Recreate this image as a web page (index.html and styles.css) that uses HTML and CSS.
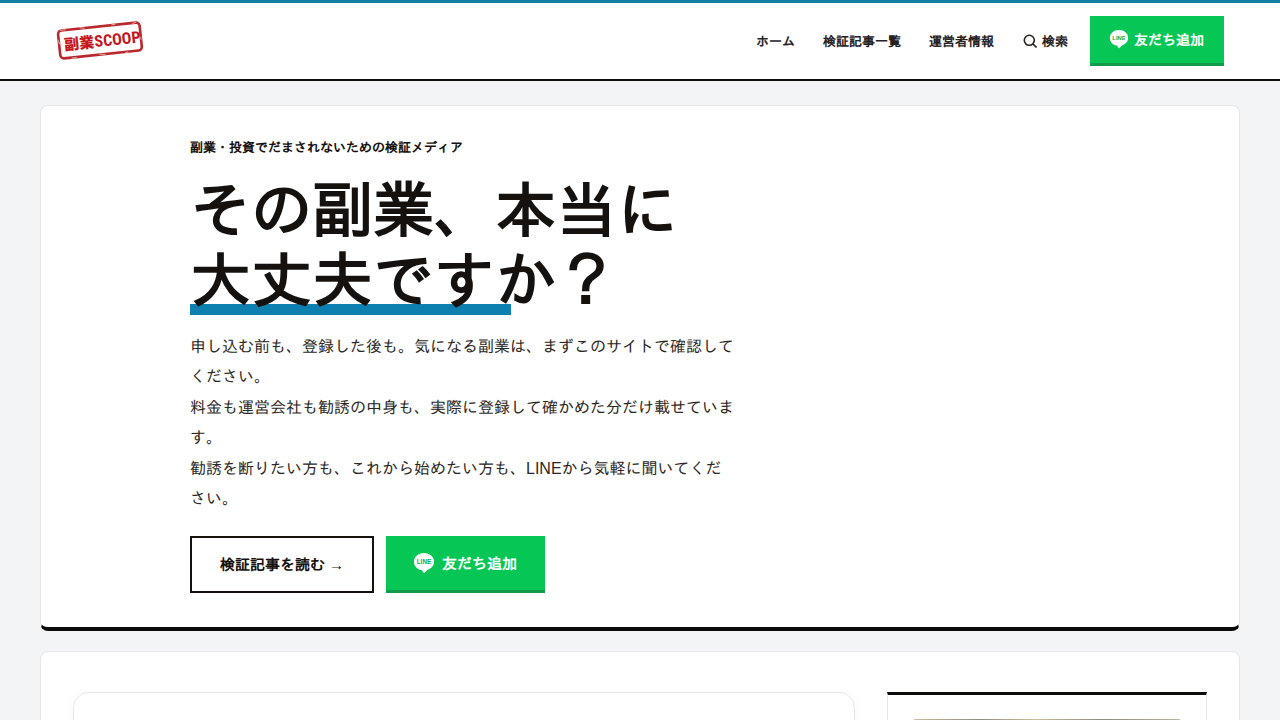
FILE: index.html
```html
<!DOCTYPE html>
<html lang="ja">
<head>
<meta charset="utf-8">
<meta name="viewport" content="width=device-width, initial-scale=1">
<title>副業SCOOP</title>
<link rel="stylesheet" href="styles.css">
</head>
<body>
<header class="site-header">
  <a class="logo" href="#" aria-label="副業SCOOP">
    <svg width="88" height="40" viewBox="0 0 88 40">
      <g transform="rotate(-6 44 20)">
        <rect x="3" y="5.500" width="82" height="28" rx="3.500" fill="none" stroke="#b9282c" stroke-width="2.600"/>
        <text x="8" y="25.500" class="stamp-kanji">副業</text>
        <text x="38.500" y="25.500" class="stamp-latin">SCOOP</text>
        <path d="M5 5.200h6M25 4.600l5 1M57 5h4M78 6l4-1M2.500 15l1 4M85 20v3M14 34h5M42 33l6 1M68 34h3" stroke="#fff" stroke-width="1" opacity=".6"/>
      </g>
    </svg>
  </a>
  <nav class="nav">
    <a href="#">ホーム</a>
    <a href="#">検証記事一覧</a>
    <a href="#">運営者情報</a>
    <button class="search" type="button">
      <svg width="14" height="14" viewBox="0 0 14 14" fill="none" stroke="currentColor" stroke-width="1.600"><circle cx="6.300" cy="6.300" r="5"/><path d="M10 10l3.500 3.500"/></svg>
      検索
    </button>
    <a class="line-btn line-btn-small" href="#">
      <svg width="20" height="20" viewBox="0 0 24 24"><path fill="#fff" d="M12 0C5.900 0 1 4.200 1 9.500c0 4.600 3.500 8.200 8.300 9.200l2.100 2.700c.4.500.8.500 1.300.1l3.100-3.200C20 16.700 23 13.700 23 9.500 23 4.200 18.100 0 12 0z"/><text x="12" y="12" text-anchor="middle" class="line-word">LINE</text></svg>
      友だち追加
    </a>
  </nav>
</header>
<main class="page">
  <section class="panel hero">
    <div class="hero-inner">
      <p class="eyebrow">副業・投資でだまされないための検証メディア</p>
      <h1>その副業、本当に<br><span class="marked">大丈夫です</span>か？</h1>
      <div class="lead">
        <p>申し込む前も、登録した後も。気になる副業は、まずこのサイトで確認してください。</p>
        <p>料金も運営会社も勧誘の中身も、実際に登録して確かめた分だけ載せています。</p>
        <p>勧誘を断りたい方も、これから始めたい方も、LINEから気軽に聞いてください。</p>
      </div>
      <div class="actions">
        <a class="read-btn" href="#">検証記事を読む <span class="arrow">→</span></a>
        <a class="line-btn" href="#">
          <svg width="22" height="22" viewBox="0 0 24 24"><path fill="#fff" d="M12 1C5.900 1 1 5.200 1 10.500c0 4.600 3.500 8.200 8.300 9.200l2.100 2.700c.4.500.8.500 1.300.1l3.100-3.200C20 17.700 23 14.700 23 10.500 23 5.200 18.100 1 12 1z"/><text x="12" y="13" text-anchor="middle" class="line-word">LINE</text></svg>
          友だち追加
        </a>
      </div>
    </div>
  </section>
  <section class="panel content">
    <article class="card"></article>
    <aside class="sidebar"><div class="banner"></div></aside>
  </section>
</main>
</body>
</html>
```
FILE: styles.css
```css
* { box-sizing: border-box; }
body {
  margin: 0;
  background: #f3f4f6;
  color: #15110e;
  font-family: "Liberation Sans", "IPAGothic", "Noto Sans CJK JP", sans-serif;
  font-size: 16px;
}
h1, p { margin: 0; }
a { color: inherit; text-decoration: none; }
.line-word { font: 700 7px "Liberation Sans", sans-serif; fill: #06b04d; }

.site-header {
  display: flex;
  align-items: center;
  justify-content: space-between;
  padding: 13px 56px;
  background: #fff;
  border-top: 3px solid #147da3;
  border-bottom: 2px solid #0e0c0b;
}
.logo svg { display: block; overflow: visible; }
.stamp-kanji { font: 900 15px "Noto Sans CJK JP", sans-serif; fill: #c4161c; }
.stamp-latin { font: 700 16px "Roboto Condensed", "Liberation Sans Narrow", Roboto, sans-serif; fill: #c4161c; }
.nav {
  display: flex;
  align-items: center;
  gap: 28px;
  color: #26221f;
  font-size: 13px;
  font-weight: 700;
}
.search {
  display: flex;
  align-items: center;
  gap: 5px;
  padding: 0 0 0 1px;
  border: 0;
  background: none;
  color: inherit;
  font: inherit;
}
.nav .line-btn { margin-left: -6px; }

.line-btn {
  display: inline-flex;
  align-items: center;
  gap: 7px;
  padding: 0 28px 0 27px;
  background: #06c755;
  border-bottom: 3px solid #139b4b;
  color: #fff;
  font-size: 15px;
  font-weight: 700;
}
.line-btn-small {
  gap: 5px;
  height: 50px;
  padding: 0 20px 0 19px;
  font-size: 14px;
}

.page {
  display: grid;
  gap: 20px;
  max-width: 1200px;
  margin: 24px auto;
}
.panel {
  background: #fff;
  border: 1px solid #e5e7eb;
  border-radius: 8px;
}
.hero {
  padding: 32px 24px 34px;
  border-bottom: 4px solid #0b0a0a;
}
.hero-inner { max-width: 900px; margin: 0 auto; }
.eyebrow { font-size: 13px; font-weight: 700; line-height: 20px; }
h1 {
  margin-top: 18px;
  font-size: 61px;
  font-weight: 700;
  line-height: 70px;
}
.marked {
  padding: 0 16px 8px 0;
  margin-right: -16px;
  background: linear-gradient(#0e80b0, #0e80b0) left bottom 8px / 100% 11px no-repeat;
}
.lead {
  display: grid;
  gap: 1px;
  max-width: 546px;
  margin-top: 16px;
  color: #2b2724;
  line-height: 30px;
}
.actions { display: flex; gap: 12px; margin-top: 22px; }
.actions a { height: 57px; }
.read-btn {
  display: inline-flex;
  align-items: center;
  gap: 4px;
  padding: 0 28px;
  border: 2px solid #15110e;
  font-size: 15px;
  font-weight: 700;
}

.content {
  display: grid;
  grid-template-columns: 1fr 320px;
  gap: 32px;
  padding: 40px 32px;
}
.card {
  min-height: 240px;
  border: 1px solid #e5e7eb;
  border-radius: 16px;
  box-shadow: 0 2px 12px rgba(0, 0, 0, .04);
}
.sidebar {
  padding: 24px;
  border: 1px solid #e5e7eb;
  border-top: 3px solid #0e0c0b;
}
.banner {
  height: 180px;
  border-radius: 4px;
  background: linear-gradient(90deg, #c9c09a, #8c8c80 25%, #c9c09a 45%, #8c8c80 70%, #b9b496);
}
```
